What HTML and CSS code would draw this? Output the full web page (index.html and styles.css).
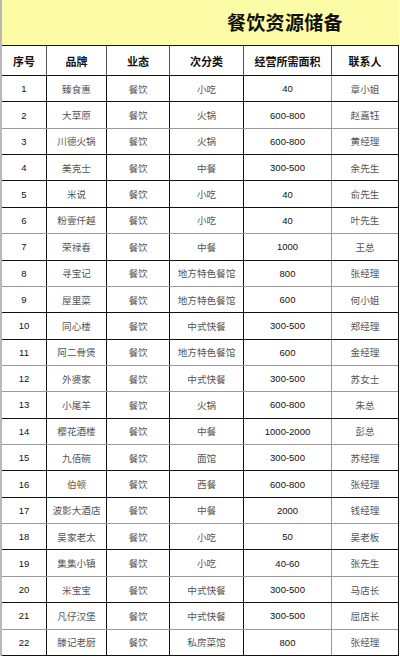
FILE: index.html
```html
<!DOCTYPE html>
<html lang="zh-CN">
<head>
<meta charset="utf-8">
<title>餐饮资源储备</title>
<link rel="stylesheet" href="styles.css">
</head>
<body>
<div class="sheet">
  <div class="title">餐饮资源储备</div>
  <div class="table">
    <div class="row head">
      <div class="c">序号</div><div class="c">品牌</div><div class="c">业态</div><div class="c">次分类</div><div class="c">经营所需面积</div><div class="c last">联系人</div>
    </div>
    <div class="row b"><div class="c n">1</div><div class="c t">臻食惠</div><div class="c t">餐饮</div><div class="c t">小吃</div><div class="c n g">40</div><div class="c t last">章小姐</div></div>
    <div class="row s"><div class="c n">2</div><div class="c t">大草原</div><div class="c t">餐饮</div><div class="c t">火锅</div><div class="c n g">600-800</div><div class="c t last">赵嘉钰</div></div>
    <div class="row b"><div class="c n">3</div><div class="c t">川德火锅</div><div class="c t">餐饮</div><div class="c t">火锅</div><div class="c n g">600-800</div><div class="c t last">黄经理</div></div>
    <div class="row b"><div class="c n">4</div><div class="c t">美克士</div><div class="c t">餐饮</div><div class="c t">中餐</div><div class="c n g">300-500</div><div class="c t last">余先生</div></div>
    <div class="row b"><div class="c n">5</div><div class="c t">米说</div><div class="c t">餐饮</div><div class="c t">小吃</div><div class="c n g">40</div><div class="c t last">俞先生</div></div>
    <div class="row s"><div class="c n">6</div><div class="c t">粉壹仟越</div><div class="c t">餐饮</div><div class="c t">小吃</div><div class="c n g">40</div><div class="c t last">叶先生</div></div>
    <div class="row b"><div class="c n">7</div><div class="c t">荣禄春</div><div class="c t">餐饮</div><div class="c t">中餐</div><div class="c n g">1000</div><div class="c t last">王总</div></div>
    <div class="row s"><div class="c n">8</div><div class="c t">寻宝记</div><div class="c t">餐饮</div><div class="c t">地方特色餐馆</div><div class="c n g">800</div><div class="c t last">张经理</div></div>
    <div class="row b"><div class="c n">9</div><div class="c t">屋里菜</div><div class="c t">餐饮</div><div class="c t">地方特色餐馆</div><div class="c n g">600</div><div class="c t last">何小姐</div></div>
    <div class="row b"><div class="c n">10</div><div class="c t">同心楼</div><div class="c t">餐饮</div><div class="c t">中式快餐</div><div class="c n g">300-500</div><div class="c t last">郑经理</div></div>
    <div class="row s"><div class="c n">11</div><div class="c t">阿二骨煲</div><div class="c t">餐饮</div><div class="c t">地方特色餐馆</div><div class="c n g">600</div><div class="c t last">金经理</div></div>
    <div class="row s"><div class="c n">12</div><div class="c t">外婆家</div><div class="c t">餐饮</div><div class="c t">中式快餐</div><div class="c n g">300-500</div><div class="c t last">苏女士</div></div>
    <div class="row b"><div class="c n">13</div><div class="c t">小尾羊</div><div class="c t">餐饮</div><div class="c t">火锅</div><div class="c n g">600-800</div><div class="c t last">朱总</div></div>
    <div class="row s"><div class="c n">14</div><div class="c t">樱花酒楼</div><div class="c t">餐饮</div><div class="c t">中餐</div><div class="c n g">1000-2000</div><div class="c t last">彭总</div></div>
    <div class="row b"><div class="c n">15</div><div class="c t">九佰碗</div><div class="c t">餐饮</div><div class="c t">面馆</div><div class="c n g">300-500</div><div class="c t last">苏经理</div></div>
    <div class="row b"><div class="c n">16</div><div class="c t">伯顿</div><div class="c t">餐饮</div><div class="c t">西餐</div><div class="c n g">600-800</div><div class="c t last">张经理</div></div>
    <div class="row s"><div class="c n">17</div><div class="c t">波影大酒店</div><div class="c t">餐饮</div><div class="c t">中餐</div><div class="c n g">2000</div><div class="c t last">钱经理</div></div>
    <div class="row b"><div class="c n">18</div><div class="c t">吴家老太</div><div class="c t">餐饮</div><div class="c t">小吃</div><div class="c n g">50</div><div class="c t last">吴老板</div></div>
    <div class="row s"><div class="c n">19</div><div class="c t">集集小镇</div><div class="c t">餐饮</div><div class="c t">小吃</div><div class="c n g">40-60</div><div class="c t last">张先生</div></div>
    <div class="row b"><div class="c n">20</div><div class="c t">米宝宝</div><div class="c t">餐饮</div><div class="c t">中式快餐</div><div class="c n g">300-500</div><div class="c t last">马店长</div></div>
    <div class="row s"><div class="c n">21</div><div class="c t">凡仔汉堡</div><div class="c t">餐饮</div><div class="c t">中式快餐</div><div class="c n g">300-500</div><div class="c t last">屈店长</div></div>
    <div class="row b"><div class="c n">22</div><div class="c t">滕记老厨</div><div class="c t">餐饮</div><div class="c t">私房菜馆</div><div class="c n g">800</div><div class="c t last">张经理</div></div>
  </div>
</div>
</body>
</html>
```
FILE: styles.css
```css
* { box-sizing: border-box; }
html, body { margin: 0; padding: 0; background: #ffffff; }
body { width: 400px; height: 658px; overflow: hidden; font-family: "Liberation Sans", "Noto Sans CJK SC", sans-serif; }
.sheet { width: 399px; border-left: 2px solid #b8b8b8; }
.title {
  height: 45px;
  background: #fdfca6;
  padding-left: 225px;
  padding-top: 10px;
  font-family: "Noto Sans CJK SC", sans-serif;
  font-weight: 700;
  font-size: 19px;
  line-height: 24px;
  color: #111;
  letter-spacing: 0.3px;
}
.table { border-top: 1px solid #111; border-right: 1px solid #111; }
.row {
  display: grid;
  grid-template-columns: 45px 60px 63px 74px 88px 1fr;
  height: 26.36px;
}
.row.head { height: 30px; border-bottom: 1px solid #111; }
.row.b { border-bottom: 1px solid #111; }
.row.s { border-bottom: 1px solid #9a9a9a; }
.c {
  display: flex;
  align-items: center;
  justify-content: center;
  border-right: 1px solid #111;
  white-space: nowrap;
  font-size: 10px;
  color: #111;
}
.c.g { border-right-color: #9a9a9a; }
.c.last { border-right: none; }
.head .c {
  font-family: "Noto Sans CJK SC", sans-serif;
  font-weight: 700;
  font-size: 11px;
  color: #111;
  border-right-color: #555;
}
.c.n { font-size: 9.5px; color: #111; }
.c.t { font-family: "Noto Sans CJK SC", sans-serif; font-size: 9.6px; color: #555; }
```
